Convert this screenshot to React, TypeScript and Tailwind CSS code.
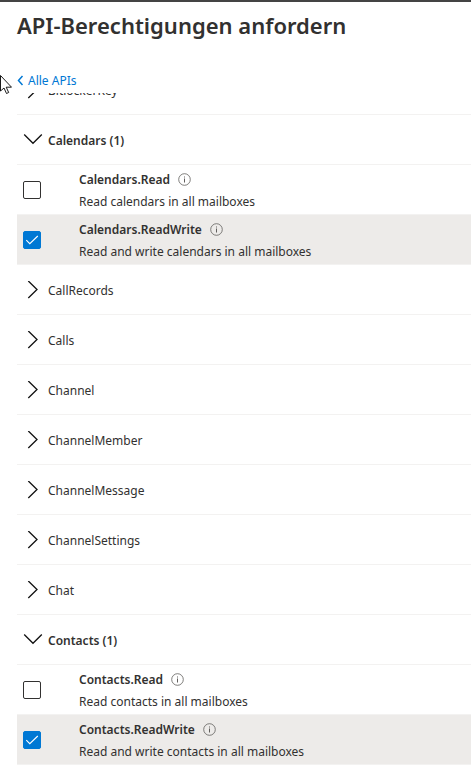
import { useState } from 'react';

interface Permission {
  name: string;
  description: string;
}

interface PermissionGroup {
  name: string;
  permissions?: Permission[];
}

const groups: PermissionGroup[] = [
  { name: 'BitlockerKey' },
  {
    name: 'Calendars',
    permissions: [
      { name: 'Calendars.Read', description: 'Read calendars in all mailboxes' },
      { name: 'Calendars.ReadWrite', description: 'Read and write calendars in all mailboxes' },
    ],
  },
  { name: 'CallRecords' },
  { name: 'Calls' },
  { name: 'Channel' },
  { name: 'ChannelMember' },
  { name: 'ChannelMessage' },
  { name: 'ChannelSettings' },
  { name: 'Chat' },
  {
    name: 'Contacts',
    permissions: [
      { name: 'Contacts.Read', description: 'Read contacts in all mailboxes' },
      { name: 'Contacts.ReadWrite', description: 'Read and write contacts in all mailboxes' },
    ],
  },
];

function Chevron({ open }: { open: boolean }) {
  return (
    <svg className="size-5 shrink-0" viewBox="0 0 20 20" fill="none" stroke="#111111" strokeWidth="1.3" aria-hidden="true">
      {open ? <path d="M1.2 3.500 10 12.300 18.800 3.500" /> : <path d="M5.300 0 14 8.500 5.300 17" />}
    </svg>
  );
}

function InfoIcon() {
  return (
    <svg className="size-[13px] shrink-0" viewBox="0 0 13 13" fill="none" stroke="#605e5c" aria-hidden="true">
      <circle cx="6.5" cy="6.5" r="5.8" strokeWidth="0.8" />
      <path d="M6.5 5.5v4M6.5 3.5v1" />
    </svg>
  );
}

function PermissionRow({
  permission,
  checked,
  onToggle,
}: {
  permission: Permission;
  checked: boolean;
  onToggle: () => void;
}) {
  return (
    <div className={`flex h-[50px] items-center border-b border-[#f3f2f1] pl-1.5 ${checked ? 'bg-[#edebe9] bg-clip-padding' : ''}`}>
      <div className="relative size-[18px] shrink-0">
        <input
          id={permission.name}
          type="checkbox"
          checked={checked}
          onChange={onToggle}
          className="block size-[18px] appearance-none rounded-xs border border-[#323130] bg-white checked:border-[#0078d4] checked:bg-[#0078d4]"
        />
        {checked && (
          <svg className="pointer-events-none absolute inset-0 size-[18px]" viewBox="0 0 18 18" fill="none" stroke="white" aria-hidden="true">
            <path d="m3.3 9.2 3.5 3.5 8-7.7" strokeWidth="1.1" />
          </svg>
        )}
      </div>
      <label htmlFor={permission.name} className="ml-[38px] pt-0.5 text-xs leading-[22px]">
        <span className="flex items-center gap-2 font-semibold">
          {permission.name}
          <InfoIcon />
        </span>
        <span className="block">{permission.description}</span>
      </label>
    </div>
  );
}

export default function App() {
  const [open, setOpen] = useState<string[]>(['Calendars', 'Contacts']);
  const [selected, setSelected] = useState<string[]>(['Calendars.ReadWrite', 'Contacts.ReadWrite']);

  const toggle = (list: string[], name: string) =>
    list.includes(name) ? list.filter((item) => item !== name) : [...list, name];

  return (
    <main className="relative border-t-2 border-[#444444] bg-white pb-1 pl-[17px] font-['Noto_Sans','Open_Sans',sans-serif] text-[#323130]">
      <h1 className="pt-2 text-[22px] leading-[30px] font-semibold">API-Berechtigungen anfordern</h1>
      <a href="#apis" className="mt-7 flex h-[25px] items-center gap-1 text-xs text-[#0078d4]">
        <svg className="h-[11px] w-[7px]" viewBox="0 0 7 11" fill="none" stroke="currentColor" strokeWidth="1.5" aria-hidden="true">
          <path d="M5.5 1 1.5 5.5l4 4.500" />
        </svg>
        Alle APIs
      </a>

      {/* Permission list, scrolled a little under the link */}
      <div className="overflow-hidden">
        <div className="-mt-7">
          {groups.map((group) => {
            const isOpen = open.includes(group.name);
            const count = (group.permissions ?? []).filter((p) => selected.includes(p.name)).length;
            return (
              <section key={group.name}>
                <button
                  type="button"
                  aria-expanded={isOpen}
                  onClick={() => setOpen(toggle(open, group.name))}
                  className={`flex h-[50px] w-full items-center gap-[5px] border-b border-[#f3f2f1] pt-0.5 pl-1.5 text-left text-xs ${
                    isOpen ? 'font-semibold' : ''
                  }`}
                >
                  <Chevron open={isOpen} />
                  <span>
                    {group.name}
                    {count > 0 && ` (${count})`}
                  </span>
                </button>
                {isOpen &&
                  group.permissions?.map((permission) => (
                    <PermissionRow
                      key={permission.name}
                      permission={permission}
                      checked={selected.includes(permission.name)}
                      onToggle={() => setSelected(toggle(selected, permission.name))}
                    />
                  ))}
              </section>
            );
          })}
        </div>
      </div>

      {/* Mouse pointer */}
      <svg className="pointer-events-none absolute top-[72px] left-0 h-5 w-3" viewBox="0 0 12 20" aria-hidden="true">
        <path d="M.5 1.500v15.500L4 14l2.500 5.500 2.200-1-2.500-5.300h5.300Z" fill="white" stroke="black" strokeWidth="0.9" />
      </svg>
    </main>
  );
}
